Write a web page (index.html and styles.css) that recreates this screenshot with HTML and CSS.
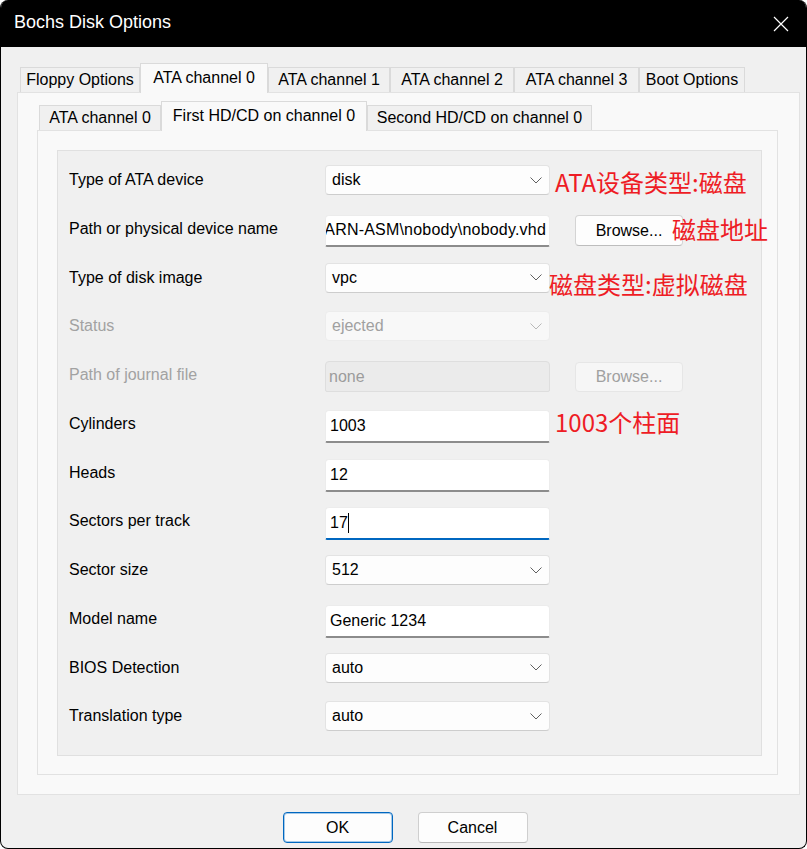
FILE: index.html
```html
<!DOCTYPE html>
<html>
<head>
<meta charset="utf-8">
<link rel="stylesheet" href="styles.css">
</head>
<body>
<div class="window">
  <div class="titlebar">
    <span class="title">Bochs Disk Options</span>
    <svg class="close" width="16" height="16" viewBox="0 0 16 16"><path d="M1 1 L15 15 M15 1 L1 15" stroke="#fff" stroke-width="1.2" fill="none"/></svg>
  </div>
  <div class="dialog">
    <div class="tabs outer-tabs">
      <div class="tab">Floppy Options</div>
      <div class="tab active">ATA channel 0</div>
      <div class="tab">ATA channel 1</div>
      <div class="tab">ATA channel 2</div>
      <div class="tab">ATA channel 3</div>
      <div class="tab">Boot Options</div>
    </div>
    <div class="panel outer-panel">
      <div class="tabs inner-tabs">
        <div class="tab">ATA channel 0</div>
        <div class="tab active">First HD/CD on channel 0</div>
        <div class="tab">Second HD/CD on channel 0</div>
      </div>
      <div class="panel inner-panel">
        <div class="page">
          <div class="row">
            <div class="label">Type of ATA device</div>
            <div class="select"><span>disk</span><svg class="chev" width="12" height="7" viewBox="0 0 12 7"><path d="M0.5 0.5 L6 6 L11.5 0.5" stroke="#606060" fill="none"/></svg></div>
          </div>
          <div class="row">
            <div class="label">Path or physical device name</div>
            <div class="input path"><span>D:\LEARN-ASM\nobody\nobody.vhd</span></div>
            <div class="button">Browse...</div>
          </div>
          <div class="row">
            <div class="label">Type of disk image</div>
            <div class="select"><span>vpc</span><svg class="chev" width="12" height="7" viewBox="0 0 12 7"><path d="M0.5 0.5 L6 6 L11.5 0.5" stroke="#606060" fill="none"/></svg></div>
          </div>
          <div class="row">
            <div class="label disabled">Status</div>
            <div class="select disabled"><span>ejected</span><svg class="chev" width="12" height="7" viewBox="0 0 12 7"><path d="M0.5 0.5 L6 6 L11.5 0.5" stroke="#b8b8b8" fill="none"/></svg></div>
          </div>
          <div class="row">
            <div class="label disabled">Path of journal file</div>
            <div class="input disabled"><span>none</span></div>
            <div class="button disabled">Browse...</div>
          </div>
          <div class="row">
            <div class="label">Cylinders</div>
            <div class="input"><span>1003</span></div>
          </div>
          <div class="row">
            <div class="label">Heads</div>
            <div class="input"><span>12</span></div>
          </div>
          <div class="row">
            <div class="label">Sectors per track</div>
            <div class="input focused"><span>17</span><span class="caret"></span></div>
          </div>
          <div class="row">
            <div class="label">Sector size</div>
            <div class="select"><span>512</span><svg class="chev" width="12" height="7" viewBox="0 0 12 7"><path d="M0.5 0.5 L6 6 L11.5 0.5" stroke="#606060" fill="none"/></svg></div>
          </div>
          <div class="row">
            <div class="label">Model name</div>
            <div class="input"><span>Generic 1234</span></div>
          </div>
          <div class="row">
            <div class="label">BIOS Detection</div>
            <div class="select"><span>auto</span><svg class="chev" width="12" height="7" viewBox="0 0 12 7"><path d="M0.5 0.5 L6 6 L11.5 0.5" stroke="#606060" fill="none"/></svg></div>
          </div>
          <div class="row">
            <div class="label">Translation type</div>
            <div class="select"><span>auto</span><svg class="chev" width="12" height="7" viewBox="0 0 12 7"><path d="M0.5 0.5 L6 6 L11.5 0.5" stroke="#606060" fill="none"/></svg></div>
          </div>

          <div class="note note-device">ATA设备类型:磁盘</div>
          <div class="note note-path">磁盘地址</div>
          <div class="note note-type">磁盘类型:虚拟磁盘</div>
          <div class="note note-cyl">1003个柱面</div>
        </div>
      </div>
    </div>
    <div class="actions">
      <div class="btn default">OK</div>
      <div class="btn">Cancel</div>
    </div>
  </div>
</div>
</body>
</html>
```

FILE: styles.css
```css
html, body {
  margin: 0;
  padding: 0;
  background: #ffffff;
}

body {
  font-family: "Liberation Sans", Arial, sans-serif;
  font-size: 16px;
  color: #000;
}

.window {
  width: 807px;
  height: 849px;
  box-sizing: border-box;
  border: 1px solid #000;
  border-top: none;
  border-radius: 8px;
  overflow: hidden;
  background: #f0f0f0;
  display: flex;
  flex-direction: column;
}

.titlebar {
  height: 47px;
  flex: none;
  background: #000;
  color: #fff;
  display: flex;
  align-items: center;
  justify-content: space-between;
  padding: 0 17px 0 13px;
  font-size: 18px;
}

.title {
  position: relative;
  top: -1px;
}

.close {
  display: block;
}

.dialog {
  padding: 16px 6px 0 16px;
}

/* Tabs */
.tabs {
  display: flex;
  align-items: flex-end;
  height: 29px;
  padding-left: 3px;
}

.inner-tabs {
  padding-left: 2px;
}

.tab {
  box-sizing: border-box;
  height: 25px;
  border: 1px solid #dadada;
  border-bottom: none;
  background: #f0f0f0;
  text-align: center;
  line-height: 24px;
  white-space: nowrap;
}

.tab.active {
  height: 30px;
  margin-bottom: -1px;
  background: #f9f9f9;
  position: relative;
  z-index: 1;
  line-height: 27px;
}

.outer-tabs .tab:nth-child(1) { width: 120px; }
.outer-tabs .tab:nth-child(2) { width: 128px; }
.outer-tabs .tab:nth-child(3) { width: 122px; }
.outer-tabs .tab:nth-child(4) { width: 124px; }
.outer-tabs .tab:nth-child(5) { width: 125px; }
.outer-tabs .tab:nth-child(6) { width: 106px; }

.inner-tabs .tab:nth-child(1) { width: 122px; }
.inner-tabs .tab:nth-child(2) { width: 206px; }
.inner-tabs .tab:nth-child(3) { width: 225px; }

/* Panels */
.panel {
  border: 1px solid #e2e2e2;
  background: #f9f9f9;
}

.outer-panel {
  padding: 8px 21px 19px 19px;
}

.inner-panel {
  padding: 19px 15px 18px 19px;
}

.page {
  position: relative;
  border: 1px solid #e0e0e0;
  background: #f0f0f0;
  padding: 14px 0 5px 11px;
}

/* Form rows */
.row {
  display: flex;
  align-items: flex-start;
  height: 48.75px;
}

.label {
  width: 256px;
  line-height: 30px;
  white-space: nowrap;
}

.label.disabled {
  color: #a2a2a2;
}

.select {
  box-sizing: border-box;
  width: 225px;
  height: 30px;
  background: #fdfdfd;
  border: 1px solid #e3e3e3;
  border-bottom-color: #cdcdcd;
  border-radius: 4px;
  display: flex;
  align-items: center;
  justify-content: space-between;
  padding: 0 7px 0 6px;
}

.select.disabled {
  background: #f8f8f8;
  border-color: #ececec;
  color: #a0a0a0;
}

.input {
  box-sizing: border-box;
  width: 225px;
  height: 33px;
  margin-top: 1px;
  background: #fff;
  border: 1px solid #ececec;
  border-bottom: 2px solid #8c8c8c;
  border-radius: 4px 4px 2px 2px;
  display: flex;
  align-items: center;
  padding: 0 4px;
  white-space: nowrap;
  overflow: hidden;
}

.input.path {
  height: 32px;
  justify-content: flex-end;
  padding: 0 3px 0 2px;
  letter-spacing: 0.2px;
}

.input.disabled {
  height: 31px;
  background: #ebebeb;
  border: 1px solid #dedede;
  color: #9c9c9c;
  padding-left: 3px;
}

.input.focused {
  border-bottom: 2px solid #0067c0;
}

.caret {
  display: inline-block;
  width: 1px;
  height: 20px;
  background: #000;
}

.button {
  box-sizing: border-box;
  width: 108px;
  height: 31px;
  margin-top: 1px;
  margin-left: 25px;
  background: #fdfdfd;
  border: 1px solid #d4d4d4;
  border-bottom-color: #bdbdbd;
  border-radius: 4px;
  text-align: center;
  line-height: 29px;
}

.button.disabled {
  height: 30px;
  margin-top: 2px;
  background: #f6f6f6;
  border-color: #e6e6e6;
  color: #a0a0a0;
  line-height: 28px;
}

/* Red annotations */
.note {
  position: absolute;
  font-family: "Noto Sans CJK SC", "Microsoft YaHei", sans-serif;
  font-size: 24px;
  line-height: 24px;
  color: #ee1c25;
  white-space: nowrap;
}

.note-device { left: 497px; top: 19px; }
.note-path   { left: 614px; top: 66px; }
.note-type   { left: 491px; top: 121px; }
.note-cyl    { left: 497px; top: 259px; }

/* Bottom buttons */
.actions {
  display: flex;
  justify-content: center;
  gap: 25px;
  margin-top: 17px;
  padding-right: 7px;
}

.btn {
  box-sizing: border-box;
  width: 110px;
  height: 31px;
  background: #fdfdfd;
  border: 1px solid #cfcfcf;
  border-bottom-color: #b9b9b9;
  border-radius: 4px;
  text-align: center;
  line-height: 29px;
}

.btn.default {
  border: 1px solid #0067c0;
  box-shadow: inset 0 0 0 1px rgba(0, 103, 192, 0.35);
}
```
